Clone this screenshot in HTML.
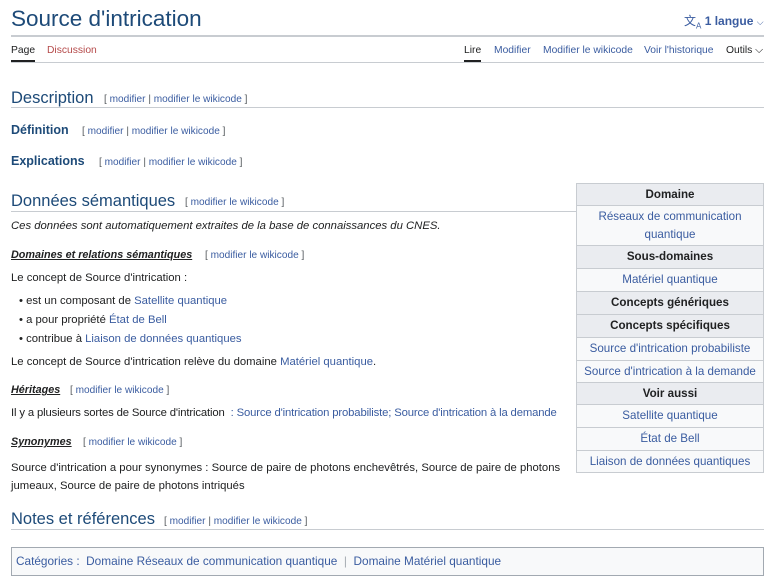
<!DOCTYPE html>
<html><head><meta charset="utf-8"><style>
*{margin:0;padding:0;box-sizing:border-box}
body{width:775px;height:582px;background:#fff;font-family:"Liberation Sans",sans-serif;color:#202122;position:relative;overflow:hidden;font-size:11.3px}
.a{position:absolute;white-space:nowrap}
.l{color:#3a5ca0}
.h{color:#1d4a78}
.e{font-size:10.1px;color:#54595d}
.e span{color:#3a5ca0}
.t{font-size:10.3px}
.rule{position:absolute;height:1px;background:#c8ccd1}
table{position:absolute;left:576px;top:183px;width:188px;border-collapse:collapse;font-size:11.6px}
td{border:1px solid #c8ccd1;text-align:center;background:#f8f9fa;color:#3a5ca0;padding:0 4px;line-height:18px}
td.hd{background:#eaecf0;color:#202122;font-weight:bold}
</style></head><body>
<div class="a h" style="left:11px;top:6px;font-size:22.5px">Source d'intrication</div>
<div class="a" style="left:684px;top:12px;font-size:12px;font-weight:bold;color:#3a5ca0"><span style="font-weight:normal;font-size:12px">文<sub style="font-size:8px">A</sub></span> 1 langue <span style="font-weight:normal;font-size:9px">⌵</span></div>
<div class="rule" style="left:11px;top:35px;width:753px;height:2px;background:#c8ccd1"></div>
<div class="a t" style="left:11px;top:45px">Page</div>
<div class="a" style="left:11px;top:60px;width:24px;height:2px;background:#202122"></div>
<div class="a t" style="left:47px;top:45px;color:#b54a4a">Discussion</div>
<div class="a t" style="left:464px;top:45px">Lire</div>
<div class="a" style="left:464px;top:60px;width:17px;height:2px;background:#202122"></div>
<div class="a l t" style="left:494px;top:45px">Modifier</div>
<div class="a l t" style="left:543px;top:45px">Modifier le wikicode</div>
<div class="a l t" style="left:644px;top:45px">Voir l'historique</div>
<div class="a t" style="left:726px;top:45px">Outils ⌵</div>
<div class="rule" style="left:11px;top:62px;width:753px"></div>

<div class="a h" style="left:11px;top:89px;font-size:16.5px">Description</div>
<div class="a e" style="left:104px;top:94px">[ <span>modifier</span> | <span>modifier le wikicode</span> ]</div>
<div class="rule" style="left:11px;top:107px;width:753px"></div>
<div class="a h" style="left:11px;top:123px;font-size:12.5px;font-weight:bold">Définition</div>
<div class="a e" style="left:82px;top:126px">[ <span>modifier</span> | <span>modifier le wikicode</span> ]</div>
<div class="a h" style="left:11px;top:154px;font-size:12.5px;font-weight:bold">Explications</div>
<div class="a e" style="left:99px;top:157px">[ <span>modifier</span> | <span>modifier le wikicode</span> ]</div>

<div class="a h" style="left:11px;top:192px;font-size:16.5px">Données sémantiques</div>
<div class="a e" style="left:185px;top:197px">[ <span>modifier le wikicode</span> ]</div>
<div class="rule" style="left:11px;top:211px;width:565px"></div>
<div class="a" style="left:11px;top:220px;font-style:italic">Ces données sont automatiquement extraites de la base de connaissances du CNES.</div>
<div class="a" style="left:11px;top:249px;font-weight:bold;font-style:italic;text-decoration:underline;font-size:10.8px">Domaines et relations sémantiques</div>
<div class="a e" style="left:205px;top:250px">[ <span>modifier le wikicode</span> ]</div>
<div class="a" style="left:11px;top:272px">Le concept de Source d'intrication :</div>
<div class="a" style="left:19px;top:295px">• est un composant de <span class="l">Satellite quantique</span></div>
<div class="a" style="left:19px;top:314px">• a pour propriété <span class="l">État de Bell</span></div>
<div class="a" style="left:19px;top:333px">• contribue à <span class="l">Liaison de données quantiques</span></div>
<div class="a" style="left:11px;top:356px">Le concept de Source d'intrication relève du domaine <span class="l">Matériel quantique</span>.</div>
<div class="a" style="left:11px;top:384px;font-weight:bold;font-style:italic;text-decoration:underline;font-size:10.8px">Héritages</div>
<div class="a e" style="left:70px;top:385px">[ <span>modifier le wikicode</span> ]</div>
<div class="a" style="left:11px;top:407px;letter-spacing:-0.15px">Il y a plusieurs sortes de Source d'intrication &nbsp;<span class="l">: Source d'intrication probabiliste; Source d'intrication à la demande</span></div>
<div class="a" style="left:11px;top:436px;font-weight:bold;font-style:italic;text-decoration:underline;font-size:10.8px">Synonymes</div>
<div class="a e" style="left:83px;top:437px">[ <span>modifier le wikicode</span> ]</div>
<div class="a" style="left:11px;top:459px;line-height:18px;white-space:normal;width:562px">Source d'intrication a pour synonymes : Source de paire de photons enchevêtrés, Source de paire de photons jumeaux, Source de paire de photons intriqués</div>

<div class="a h" style="left:11px;top:510px;font-size:16.5px">Notes et références</div>
<div class="a e" style="left:164px;top:516px">[ <span>modifier</span> | <span>modifier le wikicode</span> ]</div>
<div class="rule" style="left:11px;top:529px;width:753px"></div>
<div class="a" style="left:11px;top:547px;width:753px;height:29px;border:1px solid #a2a9b1;background:#f8f9fa"></div>
<div class="a l" style="left:16px;top:554px;font-size:11.8px">Catégories : &nbsp;Domaine Réseaux de communication quantique &nbsp;<span style="color:#a2a9b1">|</span>&nbsp; Domaine Matériel quantique</div>

<table>
<tr><td class="hd" style="height:22px">Domaine</td></tr>
<tr><td style="height:40px">Réseaux de communication quantique</td></tr>
<tr><td class="hd" style="height:23px">Sous-domaines</td></tr>
<tr><td style="height:23px">Matériel quantique</td></tr>
<tr><td class="hd" style="height:23px">Concepts génériques</td></tr>
<tr><td class="hd" style="height:23px">Concepts spécifiques</td></tr>
<tr><td style="height:23px">Source d'intrication probabiliste</td></tr>
<tr><td style="height:22px">Source d'intrication à la demande</td></tr>
<tr><td class="hd" style="height:22px">Voir aussi</td></tr>
<tr><td style="height:23px">Satellite quantique</td></tr>
<tr><td style="height:23px">État de Bell</td></tr>
<tr><td style="height:22px">Liaison de données quantiques</td></tr>
</table>
</body></html>
